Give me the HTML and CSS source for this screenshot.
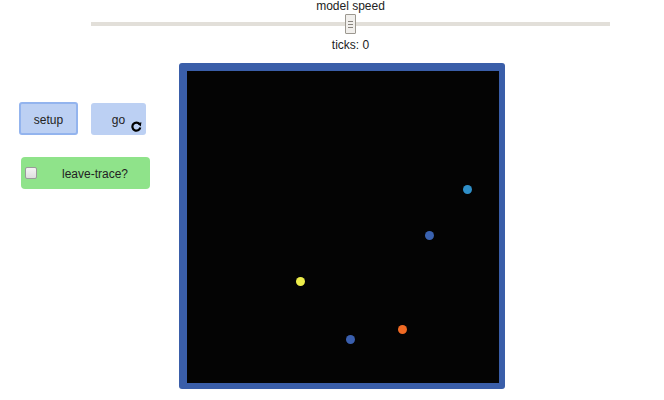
FILE: index.html
```html
<!DOCTYPE html>
<html>
<head>
<meta charset="utf-8">
<link rel="stylesheet" href="styles.css">
</head>
<body>
<div class="page">
  <div class="speed">
    <div class="speed-label">model speed</div>
    <div class="track">
      <div class="thumb"><span></span><span></span><span></span></div>
    </div>
    <div class="ticks">ticks: 0</div>
  </div>
  <div class="main">
    <div class="controls">
      <div class="buttons">
        <div class="btn setup">setup</div>
        <div class="btn go"><span class="go-label">go</span>
          <svg class="forever" width="11" height="11" viewBox="0 0 11 11"><path d="M8.6 3.2 A4 4 0 1 0 9.3 6.6" fill="none" stroke="#000" stroke-width="2.2"/><path d="M6.2 2.6 L10.4 1.2 L9.8 5.4 Z" fill="#000"/></svg>
        </div>
      </div>
      <div class="switch">
        <span class="check"></span>
        <span class="switch-label">leave-trace?</span>
      </div>
    </div>
    <div class="view">
      <div class="canvas">
        <span class="turtle t1"></span>
        <span class="turtle t2"></span>
        <span class="turtle t3"></span>
        <span class="turtle t4"></span>
        <span class="turtle t5"></span>
      </div>
    </div>
  </div>
</div>
</body>
</html>
```
FILE: styles.css
```css
html, body { margin: 0; padding: 0; background: #fff; }
body { font-family: "Liberation Sans", Arial, sans-serif; font-size: 12px; color: #222; }
.page { width: 664px; height: 400px; overflow: hidden; }

.speed { width: 519px; margin-left: 91px; display: flex; flex-direction: column; align-items: center; }
.speed-label { height: 12px; line-height: 12px; margin-top: 0; }
.track { position: relative; width: 519px; height: 4px; margin-top: 10px; background: #e2dfd9; }
.thumb { position: absolute; left: 254px; top: -8px; width: 9px; height: 18px; background: #f1efec; border: 1px solid #9c9890; border-radius: 1px; display: flex; flex-direction: column; align-items: center; justify-content: center; gap: 2px; }
.thumb span { display: block; width: 5px; height: 1px; background: #8a8680; }
.ticks { height: 12px; line-height: 12px; margin-top: 13px; }

.main { display: flex; margin-top: 12px; }
.controls { width: 179px; padding-top: 39px; }
.buttons { display: flex; align-items: flex-start; padding-left: 19px; }
.btn { box-sizing: border-box; background: #bcd0f3; border-radius: 3px; display: flex; align-items: center; justify-content: center; }
.setup { width: 59px; height: 33px; border: 2px solid #93b4ee; padding-top: 3px; }
.go { width: 55px; height: 32px; margin-left: 13px; margin-top: 1px; position: relative; }
.go-label { margin-top: 1px; }
.forever { position: absolute; left: 40px; top: 18px; }

.switch { box-sizing: border-box; width: 129px; height: 32px; margin-left: 21px; margin-top: 22px; background: #8fe38a; border-radius: 4px; display: flex; align-items: center; position: relative; }
.check { box-sizing: border-box; width: 12px; height: 12px; margin-left: 4px; border: 1px solid #9a9a9a; border-radius: 2px; background: linear-gradient(#f4f4f4, #dedede); }
.switch-label { margin-left: 25px; margin-top: 1px; }

.view { box-sizing: border-box; width: 326px; height: 326px; padding: 8px 6px 6px 8px; background: #3a5ea9; border-radius: 3px; }
.canvas { position: relative; width: 312px; height: 312px; background: #040404; }
.turtle { position: absolute; width: 9px; height: 9px; border-radius: 50%; }
.t1 { left: 276px; top: 114px; background: #2f8fc8; }
.t2 { left: 238px; top: 160px; background: #3a62b0; }
.t3 { left: 109px; top: 206px; background: #eded4b; }
.t4 { left: 211px; top: 254px; background: #f06a24; }
.t5 { left: 159px; top: 264px; background: #3a5fae; }
```
